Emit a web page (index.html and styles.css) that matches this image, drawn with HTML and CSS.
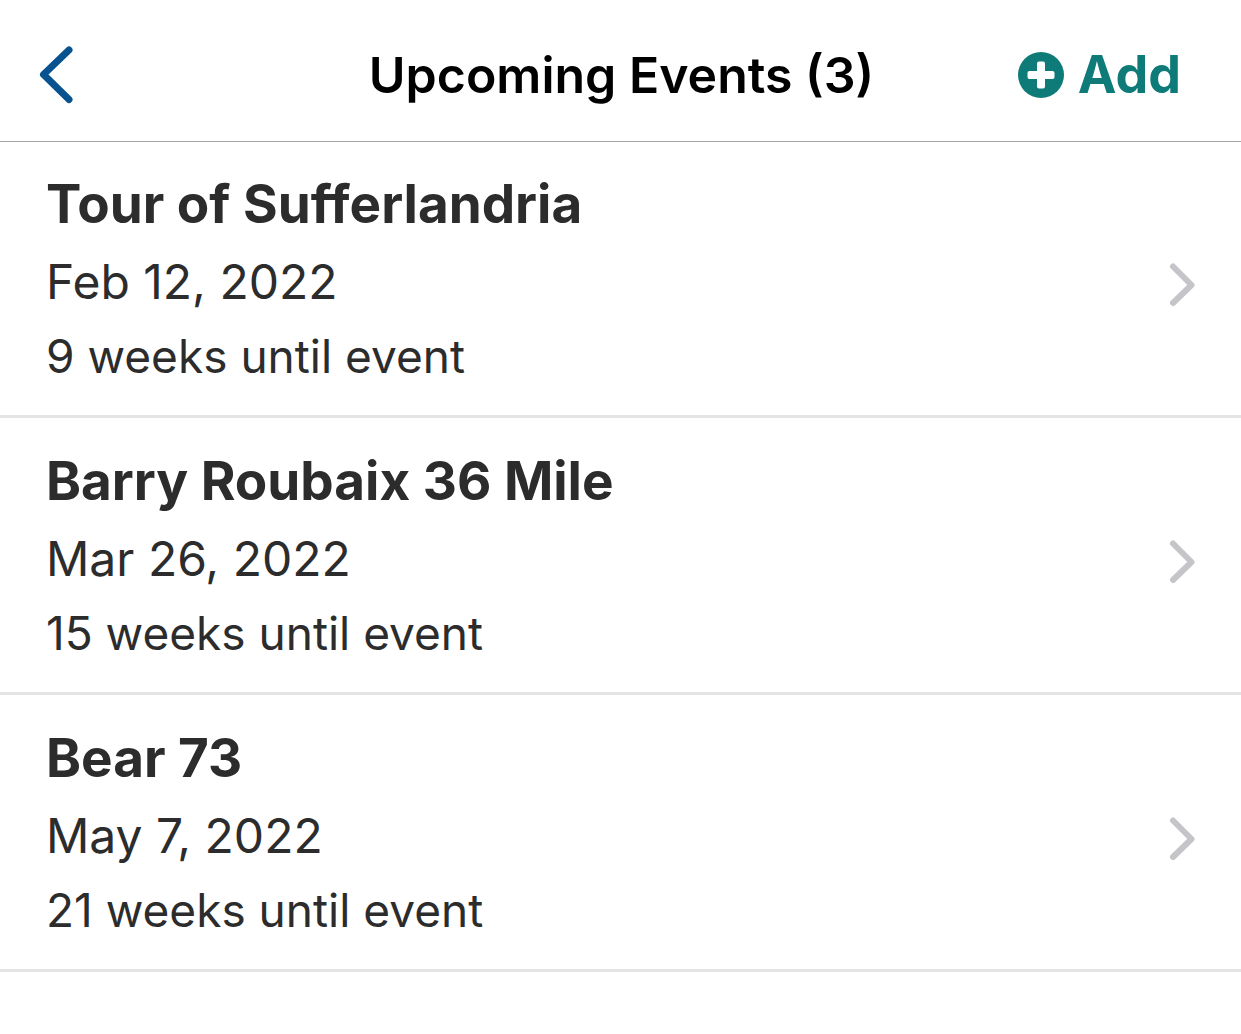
FILE: index.html
```html
<!DOCTYPE html>
<html lang="en">
<head>
<meta charset="utf-8">
<meta name="viewport" content="width=device-width, initial-scale=1">
<title>Upcoming Events</title>
<link rel="stylesheet" href="styles.css">
</head>
<body>
<header class="bar">
  <button class="back" type="button" aria-label="Back">
    <svg width="36" height="60" viewBox="0 0 36 60" fill="none" stroke="currentColor" stroke-width="7" stroke-linecap="round" stroke-linejoin="round"><path d="M31 5 5.500 29.500 31 54.500"/></svg>
  </button>
  <h1 class="title">Upcoming Events (3)</h1>
  <button class="add" type="button">
    <svg width="46" height="46" viewBox="0 0 46 46"><circle cx="23" cy="23" r="23" fill="currentColor"/><g fill="#fff"><rect x="19" y="9.500" width="8" height="27" rx="2"/><rect x="9.500" y="19" width="27" height="8" rx="2"/></g></svg>
    <span>Add</span>
  </button>
</header>
<main>
  <ul class="events">
    <li><a class="event" href="#sufferlandria">
      <div class="details">
        <h2 class="name">Tour of Sufferlandria</h2>
        <p class="date">Feb 12, 2022</p>
        <p class="until">9 weeks until event</p>
      </div>
      <svg class="chevron" width="28" height="46" viewBox="0 0 28 46"><path d="M5 4.500 23.500 23 5 41"/></svg>
    </a></li>
    <li><a class="event" href="#barry-roubaix">
      <div class="details">
        <h2 class="name">Barry Roubaix 36 Mile</h2>
        <p class="date">Mar 26, 2022</p>
        <p class="until">15 weeks until event</p>
      </div>
      <svg class="chevron" width="28" height="46" viewBox="0 0 28 46"><path d="M5 4.500 23.500 23 5 41"/></svg>
    </a></li>
    <li><a class="event" href="#bear-73">
      <div class="details">
        <h2 class="name">Bear 73</h2>
        <p class="date">May 7, 2022</p>
        <p class="until">21 weeks until event</p>
      </div>
      <svg class="chevron" width="28" height="46" viewBox="0 0 28 46"><path d="M5 4.500 23.500 23 5 41"/></svg>
    </a></li>
  </ul>
</main>
</body>
</html>
```
FILE: styles.css
```css
* {
  box-sizing: border-box;
}

body {
  margin: 0;
  background: #fff;
  color: #2c2c2d;
  font-family: Inter, "Liberation Sans", sans-serif;
}

h1, h2, p, ul {
  margin: 0;
  padding: 0;
}

button {
  padding: 0;
  border: 0;
  background: none;
  font: inherit;
  cursor: pointer;
}

svg {
  display: block;
  flex: none;
}

.bar {
  display: grid;
  grid-template-columns: 1fr auto 1fr;
  align-items: center;
  padding: 35px 60px 26px 38px;
  box-shadow: 0 1px 0 #a6a6a8;
}

.back {
  justify-self: start;
  color: #08538f;
}

.title {
  padding-left: 24px;
  color: #000;
  font-size: 50px;
  font-weight: 600;
  line-height: 80px;
  white-space: nowrap;
}

.add {
  display: flex;
  align-items: center;
  justify-self: end;
  gap: 14px;
  color: #0f7b78;
  font-size: 52px;
  font-weight: 700;
  line-height: 60px;
}

.events {
  list-style: none;
}

.event {
  display: flex;
  align-items: center;
  justify-content: space-between;
  padding: 25px 45px 11px 46px;
  border-bottom: 3px solid #e4e4e5;
  color: inherit;
  text-decoration: none;
}

.details {
  padding-bottom: 14px;
}

.name {
  font-size: 53px;
  font-weight: 700;
  font-variant-ligatures: none;
  line-height: 76px;
}

.date {
  font-size: 48px;
  line-height: 80px;
}

.until {
  font-size: 46px;
  line-height: 68px;
}

.chevron {
  fill: none;
  stroke: #c5c5c9;
  stroke-width: 6;
  stroke-linecap: round;
  stroke-linejoin: round;
}
```
